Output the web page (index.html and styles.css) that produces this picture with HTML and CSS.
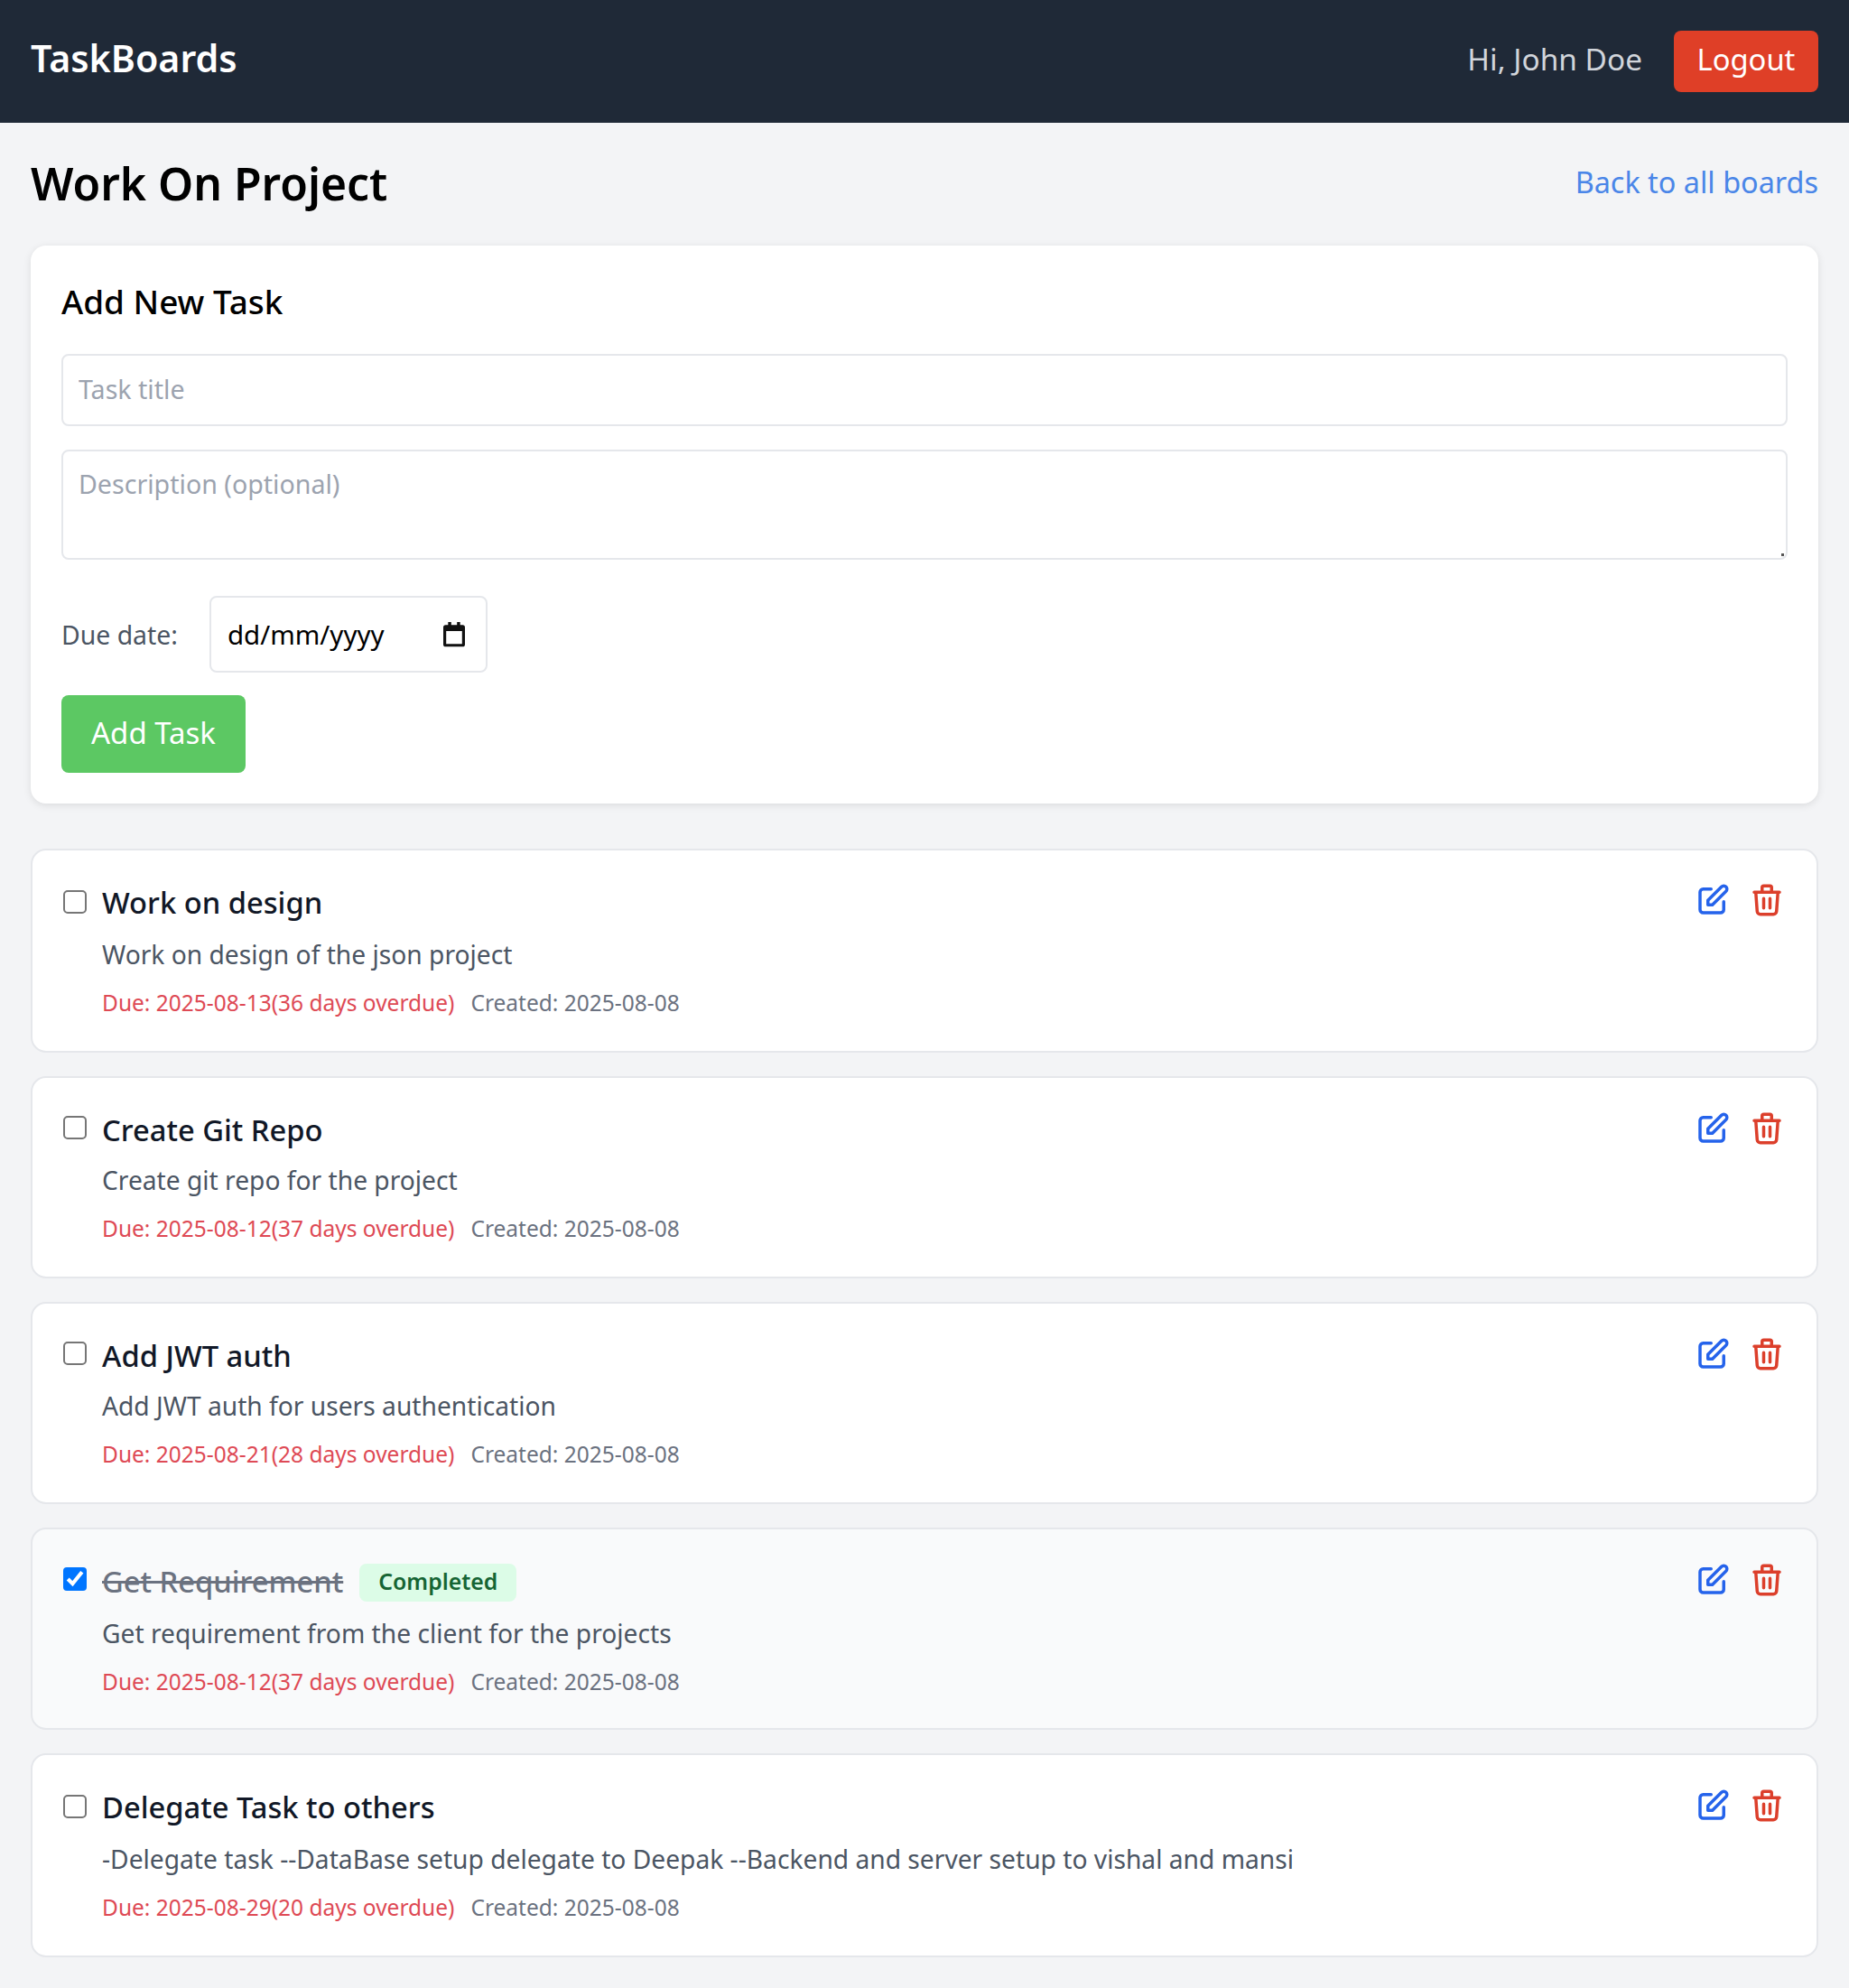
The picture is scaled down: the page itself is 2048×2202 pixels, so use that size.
FILE: index.html
```html
<!DOCTYPE html>
<html lang="en">
<head>
<meta charset="utf-8">
<title>TaskBoards</title>
<link rel="stylesheet" href="styles.css">
</head>
<body>
<svg class="sprite" width="0" height="0" aria-hidden="true">
  <symbol id="icon-edit" viewBox="0 0 24 24"><path d="M11 5H6a2 2 0 00-2 2v11a2 2 0 002 2h11a2 2 0 002-2v-5m-1.414-9.414a2 2 0 112.828 2.828L11.828 15H9v-2.828l8.586-8.586z"/></symbol>
  <symbol id="icon-trash" viewBox="0 0 24 24"><path d="M19 7l-.867 12.142A2 2 0 0116.138 21H7.862a2 2 0 01-1.995-1.858L5 7m5 4v6m4-6v6m1-10V4a1 1 0 00-1-1h-4a1 1 0 00-1 1v3M4 7h16"/></symbol>
</svg>

<header class="topbar">
  <div class="brand">TaskBoards</div>
  <div class="user">
    <span class="greeting">Hi, John Doe</span>
    <a class="btn-logout" href="#">Logout</a>
  </div>
</header>

<main class="page">
  <div class="page-head">
    <h1>Work On Project</h1>
    <a class="back-link" href="#">Back to all boards</a>
  </div>

  <form class="new-task">
    <h2>Add New Task</h2>
    <input class="field" type="text" placeholder="Task title">
    <div class="area-wrap">
      <textarea class="field field-area" placeholder="Description (optional)"></textarea>
    </div>
    <div class="due-row">
      <label class="due-label">Due date:</label>
      <div class="date-input">
        <span>dd/mm/yyyy</span>
        <svg class="cal" viewBox="0 0 24 24"><path d="M7 1.500h2.600V4h4.800V1.500H17V4h2a2 2 0 0 1 2 2v14a2 2 0 0 1-2 2H5a2 2 0 0 1-2-2V6a2 2 0 0 1 2-2h2zM5.400 9v10.600h13.200V9z"/></svg>
      </div>
    </div>
    <button class="btn-add" type="button">Add Task</button>
  </form>

  <section class="tasks">
    <article class="task">
      <input class="check" type="checkbox">
      <div class="task-body">
        <div class="task-title"><h3>Work on design</h3></div>
        <p class="task-desc">Work on design of the json project</p>
        <div class="task-meta"><span class="due">Due: 2025-08-13(36 days overdue)</span><span>Created: 2025-08-08</span></div>
      </div>
      <div class="actions">
        <svg class="icon icon-blue"><use href="#icon-edit"/></svg>
        <svg class="icon icon-red"><use href="#icon-trash"/></svg>
      </div>
    </article>

    <article class="task task-tight">
      <input class="check" type="checkbox">
      <div class="task-body">
        <div class="task-title"><h3>Create Git Repo</h3></div>
        <p class="task-desc">Create git repo for the project</p>
        <div class="task-meta"><span class="due">Due: 2025-08-12(37 days overdue)</span><span>Created: 2025-08-08</span></div>
      </div>
      <div class="actions">
        <svg class="icon icon-blue"><use href="#icon-edit"/></svg>
        <svg class="icon icon-red"><use href="#icon-trash"/></svg>
      </div>
    </article>

    <article class="task task-tight">
      <input class="check" type="checkbox">
      <div class="task-body">
        <div class="task-title"><h3>Add JWT auth</h3></div>
        <p class="task-desc">Add JWT auth for users authentication</p>
        <div class="task-meta"><span class="due">Due: 2025-08-21(28 days overdue)</span><span>Created: 2025-08-08</span></div>
      </div>
      <div class="actions">
        <svg class="icon icon-blue"><use href="#icon-edit"/></svg>
        <svg class="icon icon-red"><use href="#icon-trash"/></svg>
      </div>
    </article>

    <article class="task task-done">
      <input class="check" type="checkbox" checked>
      <div class="task-body">
        <div class="task-title"><h3>Get Requirement</h3><span class="badge">Completed</span></div>
        <p class="task-desc">Get requirement from the client for the projects</p>
        <div class="task-meta"><span class="due">Due: 2025-08-12(37 days overdue)</span><span>Created: 2025-08-08</span></div>
      </div>
      <div class="actions">
        <svg class="icon icon-blue"><use href="#icon-edit"/></svg>
        <svg class="icon icon-red"><use href="#icon-trash"/></svg>
      </div>
    </article>

    <article class="task">
      <input class="check" type="checkbox">
      <div class="task-body">
        <div class="task-title"><h3>Delegate Task to others</h3></div>
        <p class="task-desc">-Delegate task --DataBase setup delegate to Deepak --Backend and server setup to vishal and mansi</p>
        <div class="task-meta"><span class="due">Due: 2025-08-29(20 days overdue)</span><span>Created: 2025-08-08</span></div>
      </div>
      <div class="actions">
        <svg class="icon icon-blue"><use href="#icon-edit"/></svg>
        <svg class="icon icon-red"><use href="#icon-trash"/></svg>
      </div>
    </article>
  </section>
</main>
</body>
</html>
```

FILE: styles.css
```css
* {
  box-sizing: border-box;
}

body {
  margin: 0;
  background: #f3f4f6;
  color: #000;
  font-family: "Noto Sans", sans-serif;
  font-size: 26px;
}

.sprite {
  position: absolute;
}

/* top bar */
.topbar {
  height: 136px;
  padding: 0 34px;
  display: flex;
  align-items: center;
  justify-content: space-between;
  background: #1f2937;
  color: #fff;
}

.brand {
  padding-bottom: 9px;
  font-size: 41.2px;
  font-weight: 600;
}

.user {
  display: flex;
  align-items: center;
  gap: 35px;
}

.greeting {
  padding-bottom: 6px;
  font-size: 33.4px;
  color: #d1d5db;
}

.btn-logout {
  width: 160px;
  height: 68px;
  padding-bottom: 6px;
  display: flex;
  align-items: center;
  justify-content: center;
  border-radius: 8px;
  background: #df3f27;
  color: #fff;
  font-size: 32.7px;
  text-decoration: none;
}

/* page */
.page {
  padding: 34px;
}

.page-head {
  height: 68px;
  margin-bottom: 34px;
  display: flex;
  align-items: center;
  justify-content: space-between;
}

h1 {
  margin: 0;
  padding-bottom: 2px;
  font-size: 49.8px;
  font-weight: 600;
}

.back-link {
  padding-bottom: 6px;
  color: #4a86e8;
  font-size: 32.4px;
  text-decoration: none;
}

/* add form */
.new-task {
  height: 618px;
  padding: 34px;
  border-radius: 17px;
  background: #fff;
  box-shadow: 0 2px 8px rgba(0, 0, 0, 0.1);
  display: flex;
  flex-direction: column;
  align-items: flex-start;
}

h2 {
  margin: 0 0 28px;
  height: 58px;
  line-height: 57px;
  font-size: 36.9px;
  font-weight: 500;
}

.field {
  display: block;
  width: 100%;
  height: 80px;
  padding: 0 17px 4px;
  border: 2px solid #e5e7eb;
  border-radius: 8px;
  background: #fff;
  color: #111;
  font-family: inherit;
  font-size: 28.6px;
  outline: none;
}

.field::placeholder {
  color: #9ca3af;
}

.area-wrap {
  width: 100%;
  margin-top: 26px;
  position: relative;
}

/* the little resize grip */
.area-wrap::after {
  content: "";
  position: absolute;
  right: 4px;
  bottom: 4px;
  width: 3px;
  height: 3px;
  background: #555;
}

.field-area {
  height: 122px;
  padding-top: 16px;
  line-height: 40px;
  resize: none;
}

.due-row {
  margin-top: 40px;
  display: flex;
  align-items: center;
  gap: 35px;
}

.due-label {
  color: #4b5563;
  font-size: 28.4px;
}

.date-input {
  width: 308px;
  height: 85px;
  padding: 0 19px 0 18px;
  display: flex;
  align-items: center;
  justify-content: space-between;
  border: 2px solid #e5e7eb;
  border-radius: 8px;
  font-size: 29.5px;
}

.cal {
  width: 32px;
  height: 32px;
  fill: #111;
}

.btn-add {
  width: 204px;
  height: 86px;
  margin-top: 25px;
  padding: 0 0 4px;
  border: 0;
  border-radius: 8px;
  background: #5cc863;
  color: #fff;
  font-family: inherit;
  font-size: 33px;
}

/* task list */
.tasks {
  margin-top: 50px;
  display: flex;
  flex-direction: column;
  gap: 26px;
}

.task {
  min-height: 226px;
  padding: 35px 34px 34px;
  display: flex;
  align-items: flex-start;
  border: 2px solid #e5e7eb;
  border-radius: 17px;
  background: #fff;
}

.task-tight,
.task-done {
  min-height: 224px;
}

.task-done {
  background: #f9fafb;
}

/* zoom so the native box gets the thicker border of the reference */
.check {
  zoom: 2;
  width: 13px;
  height: 13px;
  margin: 4.5px 8.5px 0 0;
  flex: none;
}

.task-tight .check,
.task-done .check {
  margin-top: 3.5px;
}

.task-body {
  flex: 1;
}

.task-title {
  height: 44px;
  display: flex;
  align-items: center;
  gap: 18px;
}

h3 {
  margin: 0;
  color: #111827;
  font-size: 32.7px;
  font-weight: 500;
}

.task-done h3 {
  color: #6b7280;
  text-decoration: line-through;
}

.badge {
  height: 42px;
  margin-top: 3px;
  padding: 0 21px 4px;
  display: flex;
  align-items: center;
  border-radius: 8px;
  background: #dcfce7;
  color: #166534;
  font-size: 24.8px;
  font-weight: 600;
}

.task-desc {
  margin: 17px 0 0;
  color: #4b5563;
  font-size: 28.2px;
}

.task-tight .task-desc {
  margin-top: 15px;
}

.task-meta {
  margin-top: 18px;
  display: flex;
  gap: 18px;
  color: #6b7280;
  font-size: 24.5px;
}

.due {
  color: #de4a55;
}

.actions {
  display: flex;
  gap: 18px;
}

.task:first-child .actions {
  margin-top: -1px;
}

.icon {
  width: 42px;
  height: 42px;
  fill: none;
  stroke-width: 2;
  stroke-linecap: round;
  stroke-linejoin: round;
}

.icon-blue {
  stroke: #2563eb;
}

.icon-red {
  stroke: #dc3f2b;
}
```
